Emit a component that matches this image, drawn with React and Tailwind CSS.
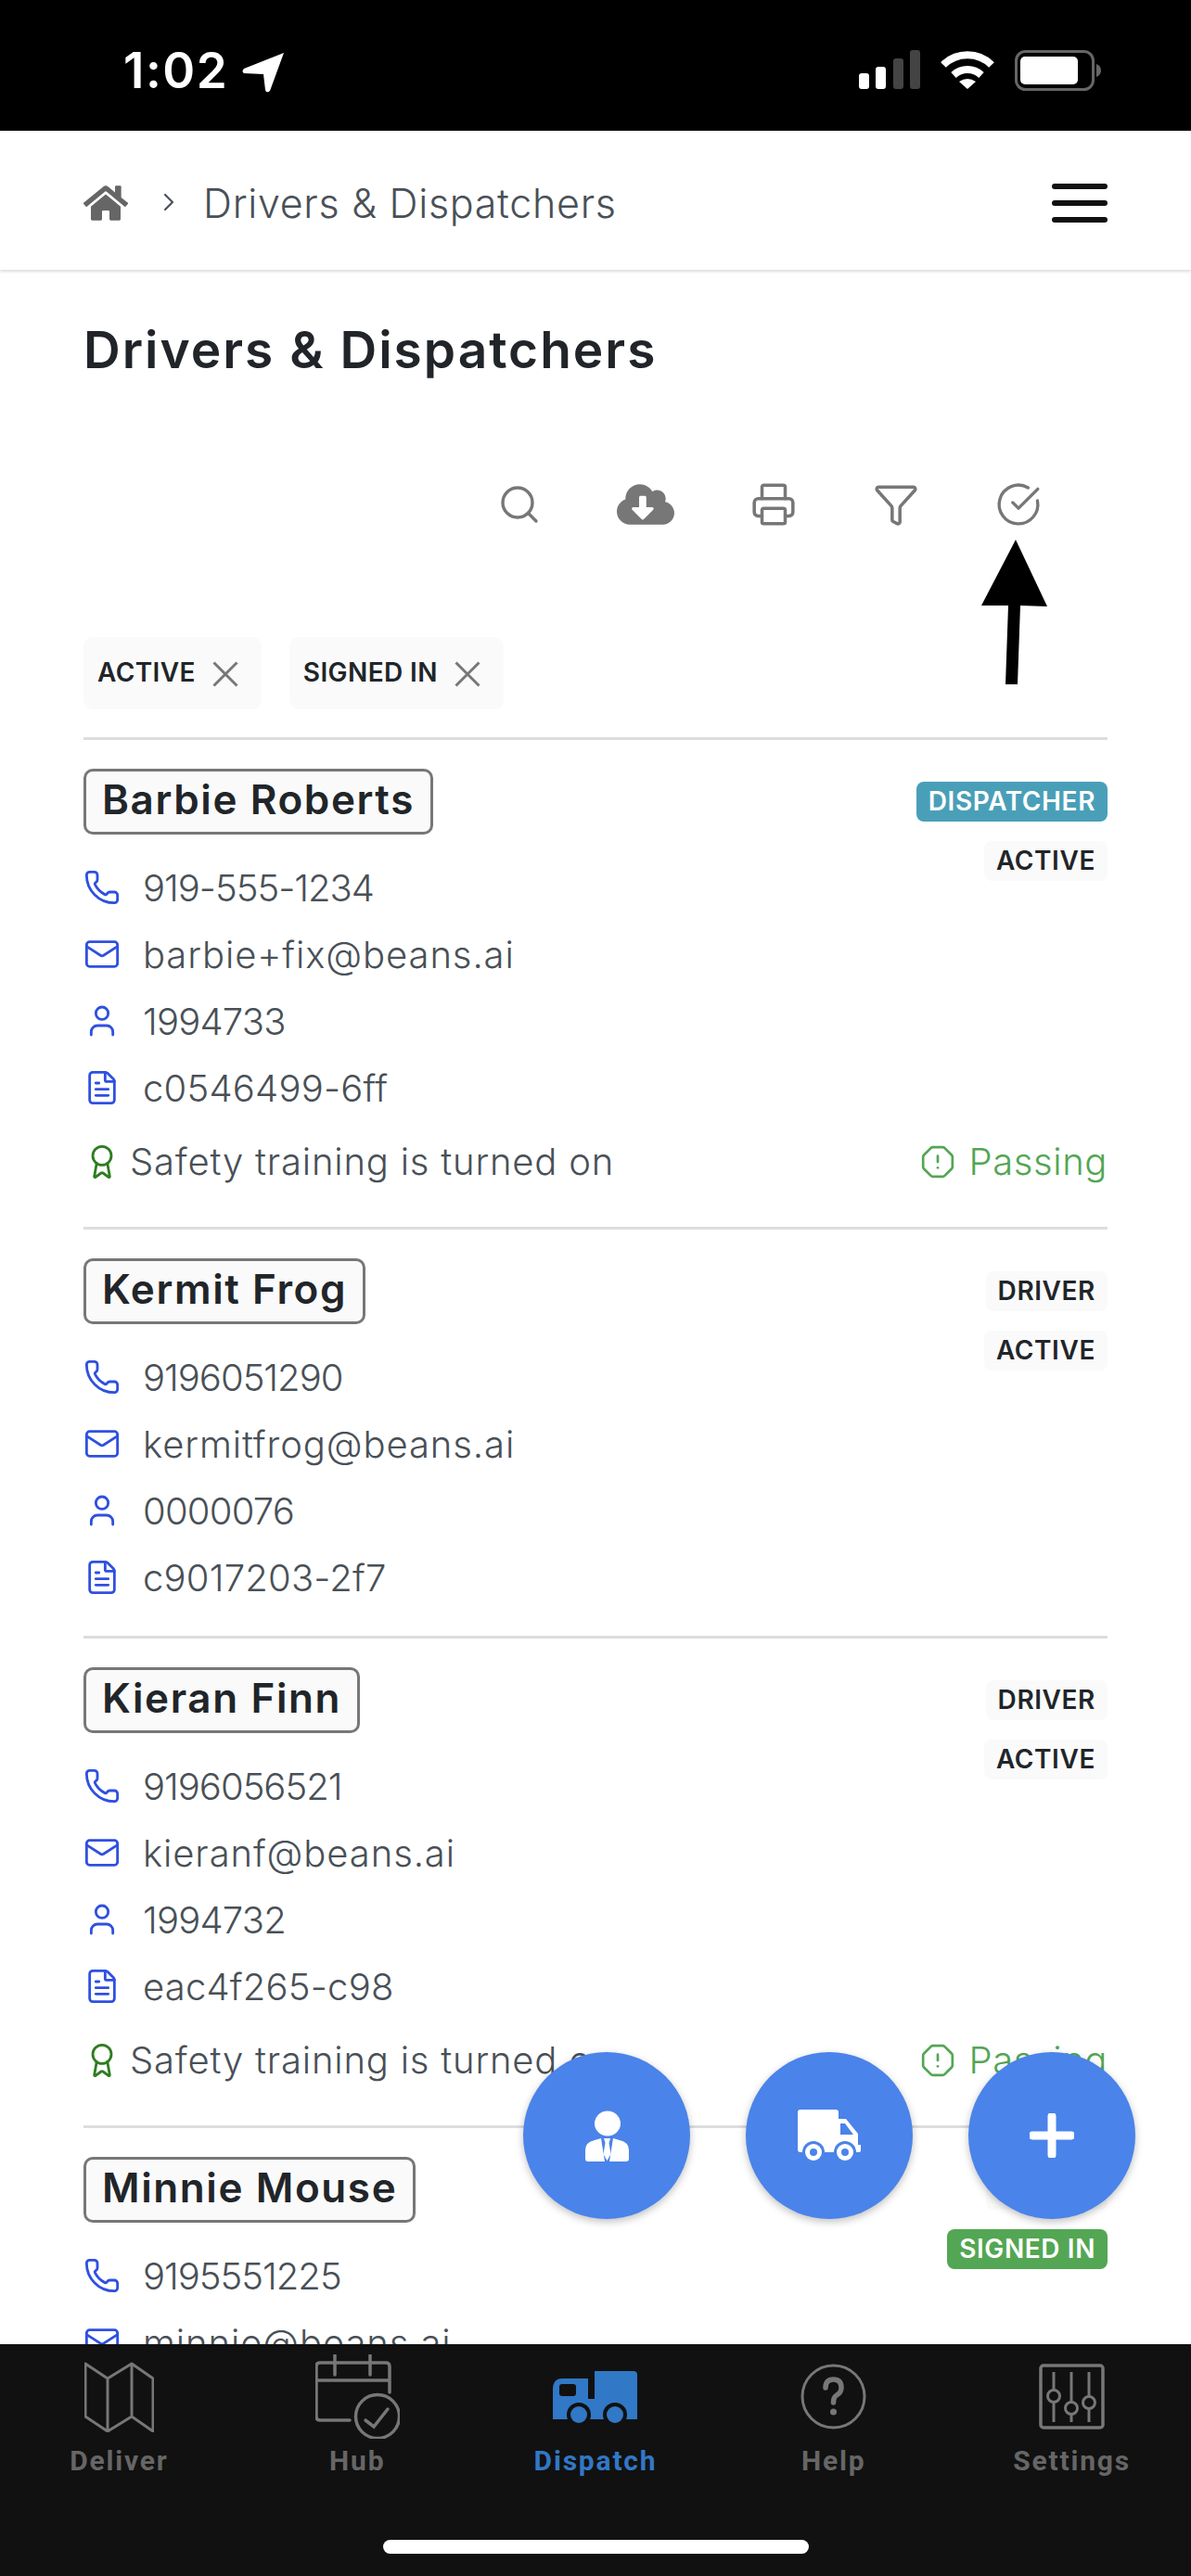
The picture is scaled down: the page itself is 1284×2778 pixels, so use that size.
import React from 'react';
import { Search, Printer, Filter, CircleCheckBig, Phone, Mail, User, FileText, Award, OctagonAlert, ChevronRight } from 'lucide-react';
import { FaCloudDownloadAlt, FaHome } from 'react-icons/fa';

const people = [
  {
    name: 'Barbie Roberts', phone: '919-555-1234', email: 'barbie+fix@beans.ai', id: '1994733', doc: 'c0546499-6ff', safety: true,
    badges: [['DISPATCHER', 'bg-[#4a9fb8] text-white'], ['ACTIVE', 'bg-[#fafafa] text-[#212529]']],
  },
  {
    name: 'Kermit Frog', phone: '9196051290', email: 'kermitfrog@beans.ai', id: '0000076', doc: 'c9017203-2f7', safety: false,
    badges: [['DRIVER', 'bg-[#fafafa] text-[#212529]'], ['ACTIVE', 'bg-[#fafafa] text-[#212529]']],
  },
  {
    name: 'Kieran Finn', phone: '9196056521', email: 'kieranf@beans.ai', id: '1994732', doc: 'eac4f265-c98', safety: true,
    badges: [['DRIVER', 'bg-[#fafafa] text-[#212529]'], ['ACTIVE', 'bg-[#fafafa] text-[#212529]']],
  },
  {
    // the rest of this card is scrolled out of view
    name: 'Minnie Mouse', phone: '9195551225', email: 'minnie@beans.ai', safety: false,
    badges: [['DRIVER', 'bg-[#fafafa] text-[#212529]'], ['SIGNED IN', 'bg-[#53a653] text-white']],
  },
];

function StatusBar() {
  return (
    <div className="h-[141px] shrink-0 bg-black flex items-start justify-between pl-[133px] pr-[96px] pt-[54px]">
      <div className="flex items-start gap-[15px]">
        <span className="text-white text-[53px] leading-[45px] font-semibold tracking-[1.5px]">1:02</span>
        <svg width="46" height="44" viewBox="0 0 46 44" className="mt-[2px]">
          <path d="M45 1 L30 42 Q26 45 25 41 L23 24 L2 23 Q-1 21 2 18 Z" fill="#fff" />
        </svg>
      </div>
      <div className="flex items-start gap-[21px]">
        <svg width="66" height="42" viewBox="0 0 66 42">
          <rect x="0" y="25" width="11" height="17" rx="3" fill="#fff" />
          <rect x="18" y="18" width="11" height="24" rx="3" fill="#fff" />
          <rect x="37" y="9" width="11" height="33" rx="3" fill="#444" />
          <rect x="55" y="0" width="11" height="42" rx="3" fill="#444" />
        </svg>
        <svg width="60" height="42" viewBox="0 0 60 42">
          <path d="M4 16 A37 37 0 0 1 56 16" fill="none" stroke="#fff" strokeWidth="8" />
          <path d="M15 27 A22 22 0 0 1 45 27" fill="none" stroke="#fff" strokeWidth="8" />
          <path d="M21 34 Q30 28 39 34 L30 42 Z" fill="#fff" />
        </svg>
        <svg width="94" height="44" viewBox="0 0 94 44">
          <rect x="1.5" y="1.5" width="83" height="41" rx="10" fill="none" stroke="#666" strokeWidth="3" />
          <rect x="6" y="7" width="62" height="30" rx="5" fill="#fff" />
          <path d="M88 15 Q93 17 93 22 Q93 27 88 29 Z" fill="#666" />
        </svg>
      </div>
    </div>
  );
}

function Header() {
  return (
    <div className="h-[150px] shrink-0 bg-white flex items-center justify-between pl-[90px] pr-[90px] pt-[6px] shadow-[0_2px_3px_rgba(0,0,0,0.14)] relative z-10">
      <div className="flex items-center">
        <FaHome size={48} color="#666" />
        <ChevronRight size={32} strokeWidth={1.6} color="#495057" className="ml-[28px] -mt-[3px]" />
        <span className="ml-[21px] text-[43px] leading-[60px] tracking-[0.7px] text-[#495057] font-light">Drivers &amp; Dispatchers</span>
      </div>
      <div className="w-[60px] flex flex-col gap-[12px]">
        <div className="h-[6px] rounded-full bg-[#111]" />
        <div className="h-[6px] rounded-full bg-[#111]" />
        <div className="h-[6px] rounded-full bg-[#111]" />
      </div>
    </div>
  );
}

function Toolbar() {
  return (
    <div className="mt-[113px] h-[44px] flex items-center justify-end gap-[88px] pr-[74px] text-[#777]">
      <Search size={48} strokeWidth={1.7} className="ml-[-4px] mr-[-6px]" />
      <FaCloudDownloadAlt size={62} className="ml-[-1px] mr-[-3px]" />
      <Printer size={50} strokeWidth={1.7} className="-mx-[3px]" />
      <Filter size={50} strokeWidth={1.7} className="-mx-[3px]" />
      <CircleCheckBig size={50} strokeWidth={1.6} className="-mx-[3px]" />
    </div>
  );
}

function Chip({ label }) {
  return (
    <div className="h-[78px] rounded-[10px] bg-[#fafafa] flex items-center pl-[15px] pr-[25px] gap-[18px]">
      <span className="text-[28px] leading-[40px] -mt-[2px] tracking-[0.4px] font-semibold text-[#212529]">{label}</span>
      <svg width="28" height="28" viewBox="0 0 28 28" className="mt-[2px]">
        <path d="M1.5 1.5 L26.5 26.5 M26.5 1.5 L1.5 26.5" stroke="#777" strokeWidth="3" />
      </svg>
    </div>
  );
}

function InfoRow({ Icon, text, className }) {
  return (
    <div className="h-[72px] flex items-center gap-[24px]">
      <div className="w-[40px] flex justify-center">
        <Icon size={42} strokeWidth={1.7} color="#2f50e0" />
      </div>
      <span className={`mt-[2px] text-[40px] text-[#495057] font-[350] ${className}`}>{text}</span>
    </div>
  );
}

function PersonCard({ person }) {
  return (
    <div className="border-t-[3px] border-[#ddd] pt-[31px] pb-[27px]">
      <div className="flex justify-between">
        <div>
          <div className="inline-flex h-[71px] items-center px-[17px] rounded-[10px] border-[3px] border-[#777] bg-[#fafafa]">
            <span className="text-[44px] leading-[60px] -mt-[5px] tracking-[1.6px] font-semibold text-[#212529]">{person.name}</span>
          </div>
          <div className="mt-[21px]">
            <InfoRow Icon={Phone} text={person.phone} className="tracking-[-1px]" />
            <InfoRow Icon={Mail} text={person.email} className="tracking-[0.9px]" />
            {person.id && <InfoRow Icon={User} text={person.id} className="tracking-[-0.8px]" />}
            {person.doc && <InfoRow Icon={FileText} text={person.doc} className="tracking-[0.2px]" />}
          </div>
        </div>
        <div className="pt-[14px] flex flex-col items-end gap-[21px]">
          {person.badges.map(([label, color]) => (
            <span key={label} className={`h-[43px] px-[13px] rounded-[8px] flex items-center text-[28px] leading-[40px] pb-[2px] tracking-[0.6px] font-semibold ${color}`}>
              {label}
            </span>
          ))}
        </div>
      </div>
      {person.safety && (
        <div className="h-[87px] flex items-center justify-between">
          <div className="flex items-center gap-[10px]">
            <div className="w-[40px] flex justify-center">
              <Award size={44} strokeWidth={1.7} color="#2e7d20" />
            </div>
            <span className="text-[40px] tracking-[0.8px] text-[#495057] font-[350]">Safety training is turned on</span>
          </div>
          <div className="flex items-center gap-[14px] text-[#53a653]">
            <OctagonAlert size={38} strokeWidth={1.7} />
            <span className="text-[40px] tracking-[0.6px] font-[350]">Passing</span>
          </div>
        </div>
      )}
    </div>
  );
}

function Fabs() {
  return (
    <div className="absolute right-[60px] bottom-[385px] flex gap-[60px] z-20">
      <button className="w-[180px] h-[180px] rounded-full bg-[#4a83ea] shadow-[0_3px_8px_rgba(0,0,0,0.25)] flex items-center justify-center">
        <svg width="47" height="55" viewBox="0 0 47 55" fill="#fff">
          <ellipse cx="24" cy="14" rx="14" ry="13.5" />
          <path d="M0 52 V43 Q0 34 10 32 L17 30 L21 55 H3 Q0 55 0 52 Z" />
          <path d="M47 52 V43 Q47 34 37 32 L30 30 L26 55 H44 Q47 55 47 52 Z" />
          <path d="M20 30 H27 L25.5 35 L27.5 47 L23.5 54 L19.5 47 L21.5 35 Z" />
        </svg>
      </button>
      <button className="w-[180px] h-[180px] rounded-full bg-[#4a83ea] shadow-[0_3px_8px_rgba(0,0,0,0.25)] flex items-center justify-center">
        <svg width="68" height="56" viewBox="0 0 68 56">
          <path d="M3 0 H41 Q44 0 44 3 V10 H52 L65 26 V38 H68 V44 Q68 46 66 46 H3 Q0 46 0 43 V3 Q0 0 3 0 Z" fill="#fff" />
          <path d="M46 15 H51 L60 27 H46 Z" fill="#4a83ea" />
          <circle cx="17" cy="46" r="12" fill="#4a83ea" />
          <circle cx="51" cy="46" r="12" fill="#4a83ea" />
          <circle cx="17" cy="46" r="9" fill="#fff" />
          <circle cx="51" cy="46" r="9" fill="#fff" />
          <circle cx="17" cy="46" r="4" fill="#4a83ea" />
          <circle cx="51" cy="46" r="4" fill="#4a83ea" />
        </svg>
      </button>
      <button className="w-[180px] h-[180px] rounded-full bg-[#4a83ea] shadow-[0_3px_8px_rgba(0,0,0,0.25)] flex items-center justify-center">
        <svg width="48" height="48" viewBox="0 0 48 48">
          <path d="M24 3 V45 M3 24 H45" stroke="#fff" strokeWidth="9" strokeLinecap="round" />
        </svg>
      </button>
    </div>
  );
}

function MapIcon() {
  return (
    <svg width="75" height="76" viewBox="-1 -1 75 76" fill="none" stroke="#777" strokeWidth="3" strokeLinejoin="round">
      <path d="M0 1 L24 17 L50 1 L73 17 V74 L50 58 L24 74 L0 58 Z M24 17 V74 M50 1 V58" />
    </svg>
  );
}

function CalendarIcon() {
  return (
    <svg width="91" height="91" viewBox="0 0 91 91" fill="none" stroke="#777" strokeWidth="3.5" strokeLinecap="round">
      <path d="M37 71 H5 Q1 71 1 67 V13 Q1 9 5 9 H76 Q80 9 80 13 V41 M1 28 H80 M21 1 V22 M59 1 V22" />
      <circle cx="67" cy="67" r="23.5" />
      <path d="M54 71 L63 78 L78 59" />
    </svg>
  );
}

function DispatchIcon() {
  return (
    <svg width="91" height="56" viewBox="0 0 91 56">
      <path d="M45 0 H87 Q91 0 91 4 V52 H0 V20 Q0 8 10 8 H38 V30 H45 Z" fill="#3178c6" />
      <rect x="7" y="14" width="18" height="13" rx="3" fill="#111" />
      <circle cx="28" cy="47" r="13" fill="#111" />
      <circle cx="67" cy="47" r="13" fill="#111" />
      <circle cx="28" cy="47" r="9" fill="#3178c6" />
      <circle cx="67" cy="47" r="9" fill="#3178c6" />
    </svg>
  );
}

function HelpIcon() {
  return (
    <svg width="71" height="71" viewBox="0 0 71 71" fill="none" stroke="#777">
      <circle cx="35.5" cy="35.5" r="33.5" strokeWidth="3" />
      <path d="M27 26 Q27 17 35.5 17 Q44 17 44 26 Q44 31 39 34 Q35.5 36 35.5 42" strokeWidth="5.5" strokeLinecap="round" />
      <circle cx="35.5" cy="52" r="3.5" fill="#777" stroke="none" />
    </svg>
  );
}

function SettingsIcon() {
  return (
    <svg width="71" height="71" viewBox="0 0 71 71" fill="none" stroke="#777" strokeWidth="3">
      <rect x="2" y="2" width="67" height="67" rx="3" strokeWidth="3.5" />
      <path d="M16 9 V29 M16 42 V63 M35 9 V42 M35 55 V63 M54 9 V35 M54 49 V63" />
      <circle cx="16" cy="35" r="6.5" />
      <circle cx="35" cy="48" r="6.5" />
      <circle cx="54" cy="42" r="6.5" />
    </svg>
  );
}

const tabs = [
  ['Deliver', MapIcon, false],
  ['Hub', CalendarIcon, false],
  ['Dispatch', DispatchIcon, true],
  ['Help', HelpIcon, false],
  ['Settings', SettingsIcon, false],
];

function TabBar() {
  return (
    <div className="h-[250px] shrink-0 bg-[#111] relative z-10">
      <div className="grid grid-cols-5 pt-[11px]">
        {tabs.map(([label, Icon, active]) => (
          <div key={label} className="flex flex-col items-center">
            <div className="h-[91px] flex items-center justify-center">
              <Icon />
            </div>
            <span className={`mt-[6px] text-[30px] leading-[36px] font-bold tracking-[1.8px] font-['Roboto',sans-serif] ${active ? 'text-[#3178c6]' : 'text-[#666]'}`}>
              {label}
            </span>
          </div>
        ))}
      </div>
      <div className="absolute bottom-[24px] left-[413px] w-[459px] h-[15px] rounded-full bg-white" />
    </div>
  );
}

export default function App() {
  return (
    <div className="relative w-[1284px] h-[2778px] flex flex-col overflow-hidden bg-white font-['Inter',sans-serif]">
      <StatusBar />
      <Header />
      <div className="flex-1 min-h-0 overflow-hidden px-[90px]">
        <h1 className="mt-[54px] text-[55px] leading-[64px] tracking-[2px] font-semibold text-[#212529]">Drivers &amp; Dispatchers</h1>
        <Toolbar />
        <div className="mt-[121px] flex gap-[30px]">
          <Chip label="ACTIVE" />
          <Chip label="SIGNED IN" />
        </div>
        <div className="mt-[30px]">
          {people.map((p) => (
            <PersonCard key={p.name} person={p} />
          ))}
        </div>
      </div>
      <TabBar />
      <Fabs />
      {/* annotation arrow drawn on top of the screenshot */}
      <svg className="absolute left-[1050px] top-[575px] z-20" width="90" height="170" viewBox="0 0 90 170">
        <path d="M45 7 L79 79 L50 78 L47 163 L34 163 L37 78 L8 78 Z" fill="#000" />
      </svg>
    </div>
  );
}
